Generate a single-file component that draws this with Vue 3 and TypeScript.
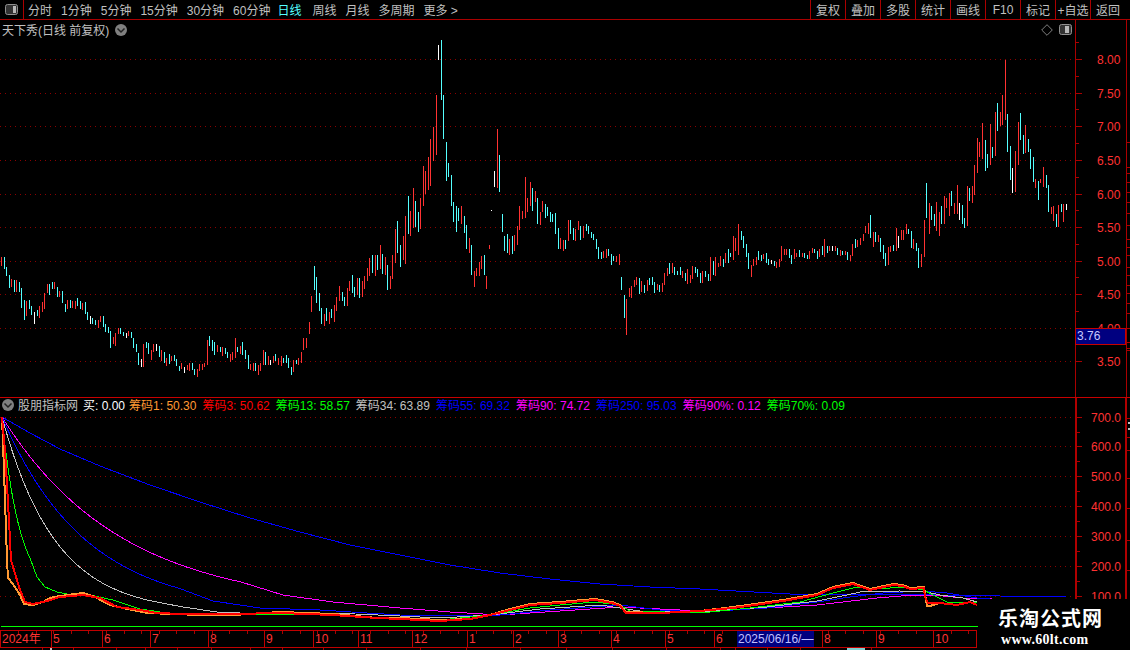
<script setup lang="ts">
interface Bar { x: number; y: number; h: number; fill: string }
const colors: Record<string, string> = { r: '#ff3232', c: '#54ffff', w: '#ffffff' }
function parse(ox: number, oy: number, s: string): Bar[] {
  return s.trim().split(',').map((row) => {
    const [z, t, b, c] = row.trim().split(/\s+/)
    const top = Math.round(oy + Number(t) / 3)
    return {
      x: Math.floor(ox + Number(z) / 3),
      y: top,
      h: Math.max(1, Math.round((Number(b) - Number(t)) / 3)),
      fill: colors[c],
    }
  })
}
const bars: Bar[] = [
  ...parse(0, 240, `4 52 80 r,13 52 87 c,19 82 110 c,28 105 144 c,34 118 142 r,43 120 156 c,49 120 156 r,58 126 156 c,64 144 204 c,73 180 240 c,79 183 228 r,88 180 207 c,94 198 225 c,103 216 252 w,112 210 228 c,118 198 234 r,127 186 216 r,133 159 207 r,142 132 159 r,148 132 165 c,157 126 147 c,163 126 147 r,172 141 171 c,178 153 171 r,187 153 189 c,196 192 216 c,202 180 207 r,211 180 204 c,217 183 204 r,226 183 207 r,232 174 198 c,241 183 207 c,247 189 210 r,256 186 222 c,262 216 240 c,271 228 252 w,277 234 252 c,286 240 255 c,295 240 264 r,301 228 246 r,310 228 261 c,316 252 276 c,325 261 279 c,331 273 324 c,340 291 312 r,346 279 318 r,355 264 282 r,361 264 282 c,370 276 288 c,379 279 294 w,385 273 288 r,394 276 294 c,400 294 324 c,409 312 336 c,415 339 375 c,424 357 381 w,430 312 381 r,439 306 324 c,445 309 342 c,454 330 360 r,460 312 336 r,469 312 333 w,478 318 351 c,484 330 363 r,493 336 369 c,499 354 378 r,508 342 372 c,514 348 363 r,523 345 363 c,529 357 378 c,538 378 393 c,544 369 387 r,553 381 399 w,562 375 390 r,568 369 393 r,577 369 390 c,583 387 405 c,592 387 411 r,598 372 393 r,607 372 390 r,613 369 381 r,622 300 375 r,628 288 318 c,637 300 333 c,643 306 345 c,652 315 336 r,661 321 336 c,667 321 348 r,676 324 342 c,682 336 354 c,691 342 366 r,697 336 360 r,706 294 354 r,712 321 336 c,721 318 342 r,727 306 345 c,736 330 357 c,745 345 387 c,751 372 390 r,760 369 393 r,766 369 393 c,775 375 405 r,781 369 393 r,790 330 375 r,796 336 375 c,805 348 375 r,811 360 375 w,820 348 369 r,826 342 363 c,835 354 375 r,844 348 378 r,850 354 369 c,859 345 369 c,865 354 384 c,874 381 405 c,880 360 396 r,889 360 372 c,895 354 375 r,904 336 369 r,910 294 330 r,919 294 324 r,928 246 282 r,934 168 216 r,943 78 150 c,949 111 189 c,958 159 213 c`),
  ...parse(310, 180, `34 384 432 c,43 402 438 r,49 384 423 c,58 396 432 r,64 387 414 c,73 375 426 r,79 351 393 r,88 318 363 r,97 336 363 c,103 351 378 c,112 324 378 r,118 303 333 r,127 285 339 c,133 321 351 c,142 294 345 r,148 294 354 c,157 303 351 r,163 288 327 r,172 264 303 r,178 234 288 r,187 225 279 c,196 225 288 r,202 225 270 c,211 195 267 r,217 222 282 c,226 231 285 r,232 255 330 c,241 288 327 r,247 225 297 r,256 147 249 r,262 123 219 c,271 195 261 c,280 168 240 r,286 108 252 r,295 48 162 c`),
  ...parse(380, 30, `91 543 617 r,100 474 594 r,106 513 591 c,115 546 606 c,121 504 597 r,130 408 528 r,136 423 492 r,145 381 480 r,151 327 468 r,160 290 391 r,169 195 375 r,175 45 90 w,184 30 210 c,190 195 327 c,199 336 453 c,205 399 441 c,214 435 528 c,220 516 576 c,229 528 606 c,235 534 573 c,244 528 582 r,253 558 609 c,259 585 657 c,268 624 669 r,274 645 735 c,283 723 771 r,289 714 738 r,298 696 738 r,304 678 717 r,313 675 735 c,319 738 777 r,328 645 657 r,334 540 543 w,343 423 471 w,352 297 474 r,358 375 486 c,367 552 606 c,373 618 663 c,382 612 669 c,388 627 675 r,397 618 672 c,403 615 663 r,412 588 645 r,418 528 600 r,427 543 567 r,436 441 564 r,442 504 546 r,451 456 528 r,457 474 543 c,466 483 516 r,472 504 582 c,481 546 585 r,487 513 546 r,496 522 564 c,502 531 558 c,511 546 576 c,517 552 576 c,526 549 612 c,535 594 657 c,541 624 657 r,550 630 663 r,556 630 657 c,565 570 633 r,571 570 612 c,580 594 630 c,586 597 633 r,595 573 600 r,601 588 630 c,610 588 624 r,619 582 603 c,625 588 612 c,634 606 624 c,640 612 630 c,649 627 657 c,655 651 687 c,664 666 687 c,670 663 684 r,679 657 684 r,685 657 678 c,694 672 705 c,700 678 693 c,709 678 696 r,718 672 705 r,724 741 780 c,733 795 864 c,739 807 915 r,748 774 801 r,754 768 804 r,763 750 771 r,769 741 765 r,778 744 792 c,784 753 786 r,793 765 789 c,802 750 783 r,808 744 765 c,817 741 765 c,823 756 789 c,832 762 780 r,838 765 786 c,847 759 786 r,853 729 765 r,862 714 738 r,868 699 732 c,877 699 729 r,883 711 735 c,892 723 735 c`),
  ...parse(670, 200, `30 201 225 c,37 213 234 r,46 219 243 c,52 207 252 r,61 225 249 r,67 198 237 r,76 201 219 c,82 207 231 c,91 219 249 c,97 213 249 r,106 213 231 c,115 222 243 c,121 171 243 r,130 183 225 c,136 171 228 r,145 189 201 r,151 168 198 r,160 177 201 c,166 159 189 r,175 147 189 c,181 159 171 c,190 108 180 r,196 114 153 r,205 72 165 r,214 93 120 c,220 108 144 c,229 132 171 c,235 159 207 c,244 195 231 r,250 177 198 r,259 171 195 r,265 153 180 c,274 165 183 c,280 162 177 r,289 159 189 c,295 177 195 c,304 180 192 w,313 183 198 c,319 186 204 r,328 177 201 r,334 138 183 r,343 147 165 r,349 147 165 r,358 147 174 c,364 165 192 c,373 147 177 r,379 159 171 r,388 150 171 c,397 159 171 r,403 159 174 c,412 165 177 c,418 153 177 r,427 144 159 r,433 147 159 c,442 153 177 c,448 147 171 r,457 138 165 c,463 117 171 r,472 138 159 c,478 138 153 r,487 138 153 w,496 138 153 r,502 144 165 c,511 150 168 r,517 153 165 c,526 153 165 r,532 156 180 c,541 165 183 r,547 132 168 r,556 117 144 c,562 120 141 r,571 114 135 r,580 102 123 r,586 78 99 r,595 69 102 r,601 45 114 c,610 96 141 r,616 96 126 c,625 105 126 r,631 114 156 c,640 135 177 c,646 159 198 c,655 141 195 r`),
  ...parse(880, 50, `31 588 606 r,40 585 603 c,49 534 603 r,55 558 594 w,64 540 570 r,70 540 570 r,79 522 552 r,85 537 552 c,94 543 594 c,100 567 597 r,109 579 603 c,115 594 654 c,124 612 651 r,133 510 621 r,139 399 504 c,148 459 552 r,154 468 510 c,163 492 528 c,169 456 543 r,178 486 558 r,184 468 522 c,193 438 522 r,199 444 474 r,208 429 498 r,214 423 468 c,223 459 492 r,232 405 492 r,238 459 510 w,247 465 522 c,253 504 534 c,262 408 528 r,268 414 453 c,277 408 459 r,283 345 435 r,292 264 369 r,298 276 321 r,307 219 327 r,316 270 363 c,322 312 354 c,331 222 345 r,337 291 324 c,346 186 318 r,352 159 243 c,361 186 228 r,367 135 225 r,376 30 210 r,382 192 306 c,391 288 390 c,397 354 429 w,406 303 426 r,415 216 345 r,421 189 270 c,430 255 312 c,436 225 309 r,445 267 306 c,451 297 357 c,460 321 396 c,466 387 414 r,475 393 450 c,481 387 399 r,490 351 411 r,499 375 414 c,505 405 486 c,514 471 492 r,520 468 513 r,529 492 531 c,535 465 531 r,544 462 486 c,550 462 516 r,559 462 480 w`),
]

const periods = [
  { label: '分时' }, { label: '1分钟' }, { label: '5分钟' }, { label: '15分钟' }, { label: '30分钟' }, { label: '60分钟' },
  { label: '日线', active: true }, { label: '周线' }, { label: '月线' }, { label: '多周期' }, { label: '更多 >' },
]
const tools = ['复权', '叠加', '多股', '统计', '画线', 'F10', '标记', '+自选', '返回']

const priceTicks = [
  { y: 59, t: '8.00' }, { y: 93, t: '7.50' }, { y: 126, t: '7.00' }, { y: 160, t: '6.50' }, { y: 194, t: '6.00' },
  { y: 227, t: '5.50' }, { y: 261, t: '5.00' }, { y: 294, t: '4.50' }, { y: 328, t: '4.00' }, { y: 361, t: '3.50' },
]
const edgeTicksTop = [142, 167, 173, 182, 192, 202, 213, 225, 239, 247, 255, 267, 275, 285, 293, 303, 313, 328, 342, 348, 350]
const valueTicks = [
  { y: 417, t: '700.0' }, { y: 446, t: '600.0' }, { y: 476, t: '500.0' }, { y: 506, t: '400.0' },
  { y: 536, t: '300.0' }, { y: 566, t: '200.0' }, { y: 596, t: '100.0' },
]
const edgeTicksLow = [418, 437, 450, 478, 508, 540, 570]

const legend = [
  { t: '买: 0.00', c: 'white' }, { t: '筹码1: 50.30', c: 'orange' }, { t: '筹码3: 50.62', c: 'red' },
  { t: '筹码13: 58.57', c: 'green' }, { t: '筹码34: 63.89', c: 'grey' }, { t: '筹码55: 69.32', c: 'blue' },
  { t: '筹码90: 74.72', c: 'magenta' }, { t: '筹码250: 95.03', c: 'blue' }, { t: '筹码90%: 0.12', c: 'magenta' },
  { t: '筹码70%: 0.09', c: 'green' },
]

// Decay head of a chip-cost curve: smooth exponential from the common start at 700.0.
function decay(base: number, tau: number, xEnd: number): string {
  const out: string[] = []
  for (let x = 2; x <= xEnd; x += 2) {
    out.push(`${x},${(base + (417 - base) * Math.exp(-(x - 2) / tau)).toFixed(1)}`)
  }
  return out.join(' ')
}

const lines = [
  { color: '#0000ff', w: 1, pts: '2,417 30,433 60,449 100,466 150,485 200,502 250,518 300,532 350,545 400,555 450,565 500,573 550,579 600,584 650,587 700,589 790,594 880,594 1000,596 1066,597' },
  { color: '#ff00ff', w: 1, pts: decay(608, 120, 240) + ' 283,595 333,602 400,608 450,612 500,615 560,611 620,607 700,611 767,608 817,605 877,598 913,595 933,595 963,598 992,599' },
  { color: '#0000ff', w: 1, pts: decay(612, 84, 180) + ' 213,601 260,608 320,610 367,613 400,615 490,616 550,610 620,605 660,610 700,612 767,608 817,602 850,597 883,593 923,591 947,593 977,598 990,599' },
  { color: '#c0c0c0', w: 1, pts: decay(613, 53.5, 150) + ' 183,607 217,612 240,613 280,613 333,613 400,616 440,618 490,615 540,609 600,605 640,611 700,612 767,607 817,601 847,595 860,592 900,591 927,592 940,595 963,598 977,602' },
  { color: '#00ff00', w: 1, pts: decay(595, 17.8, 30) + ' 37,577 45,587 57,592 67,594 90,595 113,600 140,609 167,613 200,615 233,614 280,614 333,614 367,617 400,618 440,620 490,615 530,608 560,605 595,602 620,605 630,611 700,613 750,608 800,602 833,593 857,587 873,589 907,587 924,590 933,595 947,602 963,602 977,603' },
  { color: '#ff9933', w: 2, pts: '2,417 4,470 7,560 8,578 13,584 20,595 24,604 33,605 43,602 50,598 60,596 83,593 95,597 110,605 123,608 147,613 200,615 233,615 280,612 333,614 377,618 400,618 440,620 470,619 490,615 510,609 530,604 560,602 595,599 612,602 620,605 626,612 660,613 700,611 733,607 783,600 817,594 833,587 853,583 870,589 893,584 903,585 910,588 924,587 927,606 930,606 940,603 957,605 970,602 977,605' },
  { color: '#ff0000', w: 2, pts: '2,417 5,450 9,520 11,560 17,580 20,590 25,602 33,604 47,601 60,597 83,595 100,598 117,607 140,610 157,613 183,614 233,614 280,613 333,615 377,618 400,619 440,621 470,619 490,615 510,610 530,605 560,603 595,600 612,603 620,606 626,613 660,613 700,611 733,608 783,601 817,595 833,588 853,584 870,590 893,585 903,586 910,589 924,588 925,597 928,603 940,603 957,605 970,602 977,605' },
]

const months = [
  { x: 51, t: '5' }, { x: 102, t: '6' }, { x: 150, t: '7' }, { x: 208, t: '8' }, { x: 264, t: '9' }, { x: 313, t: '10' },
  { x: 358, t: '11' }, { x: 412, t: '12' }, { x: 467, t: '1' }, { x: 513, t: '2' }, { x: 558, t: '3' }, { x: 611, t: '4' },
  { x: 665, t: '5' }, { x: 714, t: '6' }, { x: 822, t: '8' }, { x: 876, t: '9' }, { x: 933, t: '10' },
]
const minorTicks: number[] = []
for (let x = 18; x < 976; x += 17.6) minorTicks.push(Math.round(x))
const lowStubs = [42, 73, 116, 145, 177, 211, 250, 282, 323, 366, 420, 466, 520, 566, 612, 666, 720, 735, 767, 800, 871]
</script>

<template>
  <div class="screen">
    <header class="toolbar">
      <div class="toggle">
        <svg width="14" height="12" viewBox="0 0 14 12">
          <rect x="0.5" y="0.5" width="12" height="10" rx="2" fill="#333" stroke="#909090" />
          <rect x="8" y="2" width="3" height="7" fill="#b8b8b8" />
        </svg>
      </div>
      <nav class="periods">
        <span v-for="p in periods" :key="p.label" :class="{ active: p.active }">{{ p.label }}</span>
      </nav>
      <nav class="tools">
        <span v-for="t in tools" :key="t">{{ t }}</span>
      </nav>
    </header>

    <section class="price-panel">
      <svg class="chart" width="1130" height="377" viewBox="0 20 1130 377" shape-rendering="crispEdges">
        <line v-for="g in priceTicks" :key="g.y" x1="0" x2="1075" :y1="g.y + 0.5" :y2="g.y + 0.5" stroke="#8c0000" stroke-dasharray="1 4" />
        <rect v-for="(b, i) in bars" :key="i" :x="b.x" :y="b.y" width="1" :height="b.h" :fill="b.fill" />
        <rect x="1075" y="20" width="1" height="377" fill="#aa0000" />
        <rect x="1126" y="20" width="1" height="377" fill="#aa0000" />
        <g v-for="g in priceTicks" :key="'t' + g.y">
          <rect x="1076" :y="g.y" width="6" height="1" fill="#aa0000" />
          <rect x="1076" :y="g.y - 17" width="3" height="1" fill="#aa0000" />
          <text x="1097" :y="g.y + 5" class="axis-label">{{ g.t }}</text>
        </g>
        <rect v-for="y in edgeTicksTop" :key="'e' + y" x="1127" :y="y" width="3" height="1" fill="#aa0000" />
      </svg>
      <div class="title">
        <span>天下秀(日线 前复权)</span>
        <svg width="14" height="14" viewBox="0 0 14 14">
          <circle cx="7" cy="7" r="6" fill="#808080" />
          <path d="M3.5 5.5 7 9l3.5-3.5" fill="none" stroke="#222" stroke-width="1.5" />
        </svg>
      </div>
      <div class="corner">
        <svg width="12" height="12" viewBox="0 0 12 12">
          <path d="M6 .7 11.3 6 6 11.3 .7 6Z" fill="none" stroke="#808080" />
        </svg>
        <svg width="13" height="12" viewBox="0 0 13 12">
          <rect x="0.5" y="0.5" width="12" height="10" rx="2" fill="#333" stroke="#909090" />
          <rect x="6" y="2" width="4" height="7" fill="#b8b8b8" />
        </svg>
      </div>
      <div class="last-price">3.76</div>
    </section>

    <section class="indicator-panel">
      <svg class="chart" width="1130" height="232" viewBox="0 398 1130 232" shape-rendering="crispEdges">
        <line v-for="g in valueTicks" :key="g.y" x1="0" x2="1075" :y1="g.y + 0.5" :y2="g.y + 0.5" stroke="#8c0000" stroke-dasharray="1 4" />
        <polyline v-for="(l, i) in lines" :key="i" :points="l.pts" fill="none" :stroke="l.color" :stroke-width="l.w" />
        <rect x="1" y="626" width="977" height="1" fill="#00ff00" />
        <rect x="1075" y="398" width="2" height="232" fill="#b00000" />
        <rect x="1125" y="398" width="2" height="232" fill="#b00000" />
        <g v-for="g in valueTicks" :key="'t' + g.y">
          <rect x="1077" :y="g.y" width="5" height="1" fill="#aa0000" />
          <rect x="1077" :y="g.y + 15" width="3" height="1" fill="#aa0000" />
          <text x="1091" :y="g.y + 5" class="axis-label">{{ g.t }}</text>
        </g>
        <rect v-for="y in edgeTicksLow" :key="'l' + y" x="1127" :y="y" width="3" height="1" fill="#aa0000" />
        <rect x="1128" y="422" width="2" height="2" fill="#c0c0c0" />
        <rect x="1128" y="428" width="2" height="2" fill="#c0c0c0" />
      </svg>
      <div class="legend">
        <svg width="14" height="14" viewBox="0 0 14 14">
          <circle cx="7" cy="7" r="6" fill="#808080" />
          <path d="M3.5 5.5 7 9l3.5-3.5" fill="none" stroke="#222" stroke-width="1.5" />
        </svg>
        <span class="legend-name">股朋指标网</span>
        <span v-for="item in legend" :key="item.t" :class="item.c">{{ item.t }}</span>
      </div>
    </section>

    <footer class="time-axis">
      <svg class="chart" width="1130" height="20" viewBox="0 630 1130 20" shape-rendering="crispEdges">
        <rect x="0" y="630" width="977" height="1" fill="#c00000" />
        <rect x="0" y="647" width="977" height="1" fill="#c00000" />
        <rect x="0" y="630" width="1" height="17" fill="#c00000" />
        <rect x="976" y="630" width="1" height="17" fill="#c00000" />
        <rect v-for="x in minorTicks" :key="x" :x="x" y="631" width="1" height="3" fill="#aa0000" />
        <rect v-for="x in lowStubs" :key="'s' + x" :x="x" y="648" width="1" height="2" fill="#aa0000" />
        <g v-for="m in months" :key="m.x">
          <rect :x="m.x" y="630" width="1" height="17" fill="#c00000" />
          <text :x="m.x + 2" y="643" class="axis-label">{{ m.t }}</text>
        </g>
        <text x="2" y="643" class="axis-label">2024年</text>
        <rect x="737" y="631" width="77" height="16" fill="#000080" />
        <text x="738" y="643" class="cursor-label">2025/06/16/—</text>
        <rect x="847" y="648" width="18" height="2" fill="#7fd0d0" />
        <rect x="50" y="648" width="2" height="2" fill="#c0c0c0" />
      </svg>
    </footer>

    <aside class="watermark">
      <strong>乐淘公式网</strong>
      <em>www.60lt.com</em>
    </aside>
  </div>
</template>

<style scoped>
.screen {
  position: relative;
  display: flex;
  flex-direction: column;
  width: 1130px;
  height: 650px;
  overflow: hidden;
  background: #000;
  color: #c0c0c0;
  font: 12px "Liberation Sans", "Noto Sans CJK SC", sans-serif;
}
.toolbar {
  display: flex;
  flex: none;
  height: 19px;
  border-bottom: 1px solid #aa0000;
}
.toggle {
  display: flex;
  align-items: center;
  justify-content: center;
  width: 23px;
  border-right: 1px solid #aa0000;
  padding-top: 1px;
  box-sizing: content-box;
}
.periods {
  display: flex;
  align-items: center;
  gap: 9px;
  margin-left: 4px;
  white-space: nowrap;
}
.periods .active {
  margin-left: -2px;
  margin-right: 2px;
  color: #54ffff;
}
.tools {
  display: flex;
  margin-left: auto;
  margin-right: 5px;
}
.tools span {
  display: flex;
  align-items: center;
  justify-content: center;
  width: 34px;
  border-left: 1px solid #aa0000;
  white-space: nowrap;
}
.price-panel {
  position: relative;
  flex: none;
  height: 377px;
  border-bottom: 1px solid #c80000;
}
.indicator-panel {
  position: relative;
  flex: none;
  height: 232px;
}
.time-axis {
  flex: none;
  height: 20px;
}
.chart {
  display: block;
}
.axis-label {
  fill: #ff3232;
  font-size: 12px;
}
.cursor-label {
  fill: #c0c0ff;
  font-size: 12px;
}
.title {
  position: absolute;
  left: 2px;
  top: 1px;
  display: flex;
  align-items: center;
  gap: 5px;
  height: 17px;
}
.corner {
  position: absolute;
  left: 1041px;
  top: 4px;
  display: flex;
  gap: 6px;
}
.last-price {
  position: absolute;
  left: 1075px;
  top: 308px;
  width: 48px;
  height: 15px;
  border: 1px solid #c80000;
  background: #000080;
  color: #c8c8ff;
  line-height: 15px;
  padding-left: 1px;
  box-sizing: content-box;
}
.legend {
  position: absolute;
  left: 1px;
  top: -1px;
  display: flex;
  align-items: center;
  gap: 6px;
  height: 15px;
  white-space: nowrap;
}
.legend-name {
  margin-left: -3px;
}
.white { color: #fff; margin-left: -1px; margin-right: -2px; }
.orange { color: #ff9933; }
.red { color: #ff0000; }
.green { color: #00ff00; }
.grey { color: #c0c0c0; }
.blue { color: #0000ff; }
.magenta { color: #ff00ff; }
.watermark {
  position: absolute;
  left: 978px;
  top: 599px;
  width: 152px;
  height: 51px;
  background: #000;
  display: flex;
  flex-direction: column;
  align-items: flex-start;
  padding: 6px 0 0 20px;
  box-sizing: border-box;
  color: #fff;
}
.watermark strong {
  font: 700 20px/26px "Noto Sans CJK SC", sans-serif;
  letter-spacing: 1px;
}
.watermark em {
  font: 700 14px/18px "Liberation Serif", serif;
  margin-left: 3px;
  letter-spacing: 0.3px;
}
</style>
